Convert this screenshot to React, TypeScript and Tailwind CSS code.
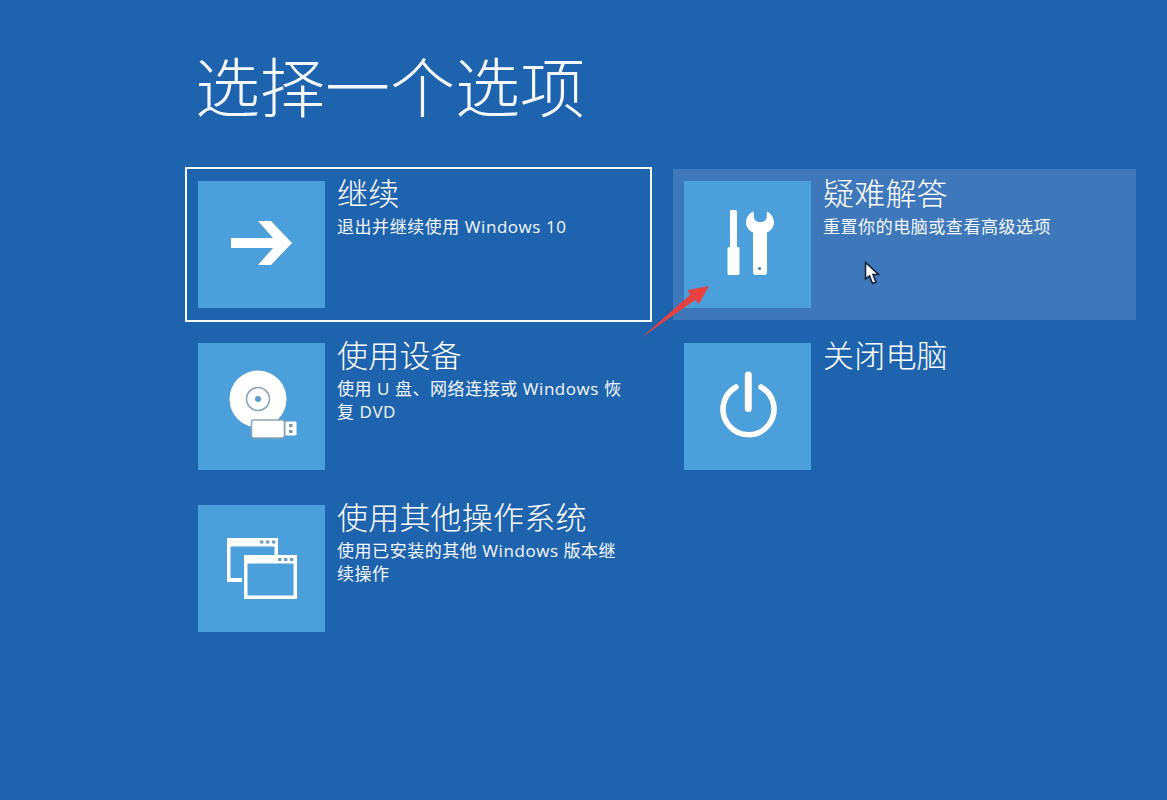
import React from "react";

const Tile = ({ children }: { children: React.ReactNode }) => (
  <div className="w-[127px] h-[127px] shrink-0 bg-[#4b9fdb]">
    <svg viewBox="0 0 127 127" width="127" height="127" fill="none">{children}</svg>
  </div>
);

const ArrowIcon = () => (
  <polygon fill="#fff" points="33,57 75,57 60,40 73,40 94,62 73,84 60,84 75,67 33,67" />
);
const ToolsIcon = () => (
  <g fill="#fff">
    <rect x="46" y="29" width="7" height="39" rx="1.5" />
    <rect x="43.5" y="66" width="12" height="28" rx="1.5" />
    <path d="M69.5 30.5 C65 32.5 62 36.5 62 41.5 C62 46 65 49.5 69 51.5 L69 91 Q69 94 72 94 L80 94 Q83 94 83 91 L83 51.5 C87 49.5 90 46 90 41.5 C90 36.5 87 32.5 83 30.5 L82.5 37 Q81.5 40.5 78 41 L74.5 41 Q71 40.5 70 37 Z" />
    <circle cx="75.5" cy="87.5" r="1.6" fill="#4c7fa8" />
  </g>
);
const DiscIcon = () => (
  <g>
    <circle cx="60" cy="56" r="28.5" fill="#fff" />
    <circle cx="60" cy="56" r="11.5" stroke="#8aa3b5" strokeWidth="1.6" fill="#fff" />
    <circle cx="60" cy="56" r="3" fill="#5b9fd0" />
    <rect x="53.5" y="77" width="33" height="18" rx="2.5" fill="#fff" stroke="#8aa3b5" strokeWidth="1.5" />
    <rect x="87.5" y="78.5" width="11" height="14" rx="1" fill="#fff" />
    <rect x="91" y="81" width="3.5" height="3" fill="#7c98ad" />
    <rect x="91" y="87" width="3.5" height="3" fill="#7c98ad" />
  </g>
);
const PowerIcon = () => (
  <g stroke="#fff" strokeLinecap="round">
    <path d="M52 44 A25.5 25.5 0 1 0 77 44" strokeWidth="5.5" />
    <path d="M64.3 32 V65.5" strokeWidth="7" />
  </g>
);
const WindowsIcon = () => (
  <g>
    <path fill="#fff" d="M29 33 H80 V50 H76.5 V41.5 H32.5 V73 H44 V77 H29 Z" />
    <rect x="62" y="35.5" width="3.4" height="3" fill="#6f9dc0" />
    <rect x="68" y="35.5" width="3.4" height="3" fill="#6f9dc0" />
    <rect x="74" y="35.5" width="3.4" height="3" fill="#6f9dc0" />
    <path fill="#fff" fillRule="evenodd" d="M46 50 H99 V94 H46 Z M49.5 58.5 V90.5 H95.5 V58.5 Z" />
    <rect x="80" y="53" width="3.4" height="3" fill="#6f9dc0" />
    <rect x="86" y="53" width="3.4" height="3" fill="#6f9dc0" />
    <rect x="92" y="53" width="3.4" height="3" fill="#6f9dc0" />
  </g>
);

const Option = ({
  icon,
  title,
  desc,
  className = "",
}: {
  icon: React.ReactNode;
  title: string;
  desc?: string;
  className?: string;
}) => (
  <div className={`w-[463px] h-[151px] flex gap-[12px] pt-3 pl-[11px] ${className}`}>
    <Tile>{icon}</Tile>
    <div className="w-[290px] text-white">
      <div className="text-[31px] leading-[24px] font-light tracking-[0.2px]">{title}</div>
      {desc && <div className="mt-[10px] text-[17px] leading-[23px] tracking-[0.55px] text-[#f4f9fd]">{desc}</div>}
    </div>
  </div>
);

export default function App() {
  return (
    <div className="relative w-[1167px] h-[800px] overflow-hidden bg-[#1e63ae] pl-[187px] pt-[48px] font-['Open_Sans','Noto_Sans_CJK_SC',sans-serif]">
      <h1 className="ml-[8px] h-[121px] text-[65px] leading-[78px] font-light text-[#f4f8fc]">选择一个选项</h1>
      <div className="grid grid-cols-[463px_463px] gap-x-[23px] gap-y-[11px]">
        <Option className="outline-2 outline-[#f4fafd]" icon={<ArrowIcon />} title="继续" desc="退出并继续使用 Windows 10" />
        <Option className="bg-[#3f78ba]" icon={<ToolsIcon />} title="疑难解答" desc="重置你的电脑或查看高级选项" />
        <Option icon={<DiscIcon />} title="使用设备" desc="使用 U 盘、网络连接或 Windows 恢复 DVD" />
        <Option icon={<PowerIcon />} title="关闭电脑" />
        <Option icon={<WindowsIcon />} title="使用其他操作系统" desc="使用已安装的其他 Windows 版本继续操作" />
      </div>
      <svg className="absolute left-[640px] top-[284px]" width="72" height="56" viewBox="0 0 72 56">
        <polygon fill="#e9413f" points="1,54 50,11 48,6 69,2 59,20 55,16" />
      </svg>
      <svg className="absolute left-[864px] top-[261px]" width="18" height="26" viewBox="0 0 18 26">
        <polygon fill="#fff" stroke="#14233a" strokeWidth="1.6" points="1.5,1.5 1.5,18 5.5,15 8.5,22.5 12,21 9,13.5 14.5,13.5" />
      </svg>
    </div>
  );
}
